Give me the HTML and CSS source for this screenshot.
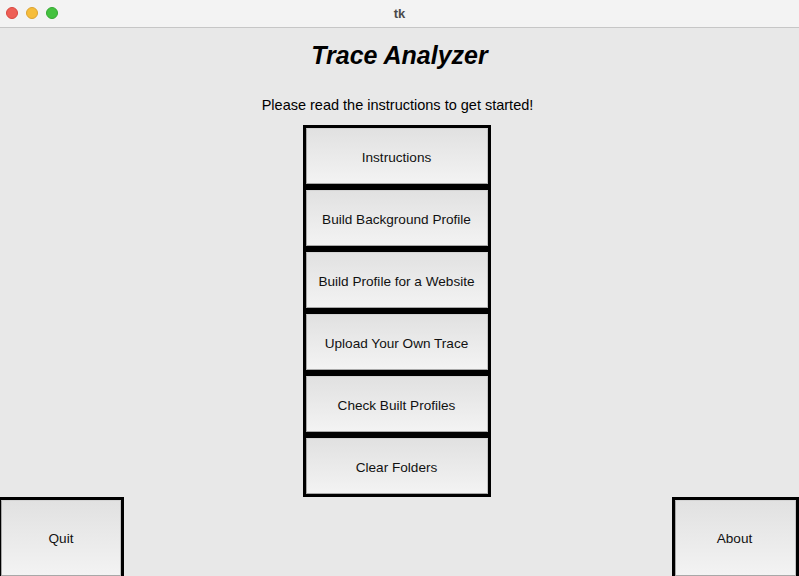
FILE: index.html
```html
<!DOCTYPE html>
<html>
<head>
<meta charset="utf-8">
<link rel="stylesheet" href="styles.css">
</head>
<body>
<div class="window">
  <div class="titlebar">
    <div class="lights">
      <span class="light red"></span>
      <span class="light yellow"></span>
      <span class="light green"></span>
    </div>
    <div class="wtitle">tk</div>
  </div>
  <div class="content">
    <h1 class="title">Trace Analyzer</h1>
    <p class="subtitle">Please read the instructions to get started!</p>
    <div class="stack">
      <div class="frame"><button class="btn">Instructions</button></div>
      <div class="frame"><button class="btn">Build Background Profile</button></div>
      <div class="frame"><button class="btn">Build Profile for a Website</button></div>
      <div class="frame"><button class="btn">Upload Your Own Trace</button></div>
      <div class="frame"><button class="btn">Check Built Profiles</button></div>
      <div class="frame"><button class="btn">Clear Folders</button></div>
    </div>
    <div class="footer">
      <div class="frame big quit"><button class="btn">Quit</button></div>
      <div class="frame big about"><button class="btn">About</button></div>
    </div>
  </div>
</div>
</body>
</html>
```

FILE: styles.css
```css
html, body {
  margin: 0;
  padding: 0;
  width: 799px;
  height: 576px;
  overflow: hidden;
  font-family: "Liberation Sans", Arial, sans-serif;
}
.window {
  width: 799px;
  height: 576px;
  background: #e8e8e8;
  display: flex;
  flex-direction: column;
  overflow: hidden;
}
.titlebar {
  height: 27px;
  flex: none;
  background: #f3f3f3;
  border-bottom: 1px solid #c6c6c6;
  position: relative;
  display: flex;
  align-items: center;
  justify-content: center;
}
.lights {
  position: absolute;
  left: 6px;
  top: 7px;
  display: flex;
  gap: 8px;
}
.light {
  width: 12px;
  height: 12px;
  border-radius: 50%;
  box-sizing: border-box;
}
.red { background: #ee5f56; border: 1px solid #d9473f; }
.yellow { background: #f6bd3a; border: 1px solid #dca330; }
.green { background: #44c23f; border: 1px solid #34a831; }
.wtitle {
  font-weight: bold;
  font-size: 13px;
  color: #4a4a4a;
}
.content {
  display: flex;
  flex-direction: column;
  align-items: center;
  flex: 1;
}
.title {
  margin: 12px 0 0 0;
  font-size: 25px;
  line-height: 30px;
  font-weight: bold;
  font-style: italic;
  color: #000;
}
.subtitle {
  margin: 25px 4px 0 0;
  font-size: 14.5px;
  line-height: 20px;
  color: #000;
}
.stack {
  margin: 10px 6px 0 0;
  display: flex;
  flex-direction: column;
}
.frame {
  width: 188px;
  height: 62px;
  box-sizing: border-box;
  border: 3px solid #000;
  background: #000;
  display: flex;
}
.btn {
  flex: 1;
  margin: 0;
  padding: 2px 0 0 0;
  font-family: "Liberation Sans", Arial, sans-serif;
  font-size: 13.6px;
  color: #111;
  background: linear-gradient(#e1e1e1, #f3f3f3);
  border: 1px solid #a8a8a8;
  border-top-color: #d4d4d4;
  border-right-color: #c4c4c4;
}
.footer {
  width: 801px;
  margin-left: -2px;
  display: flex;
  justify-content: space-between;
  align-self: flex-start;
}
.frame.big {
  width: 126px;
  height: 82px;
}
.frame.big .btn {
  padding: 0;
}
.frame.about {
  width: 127px;
}
.frame.about .btn {
  padding-right: 2px;
}
```
